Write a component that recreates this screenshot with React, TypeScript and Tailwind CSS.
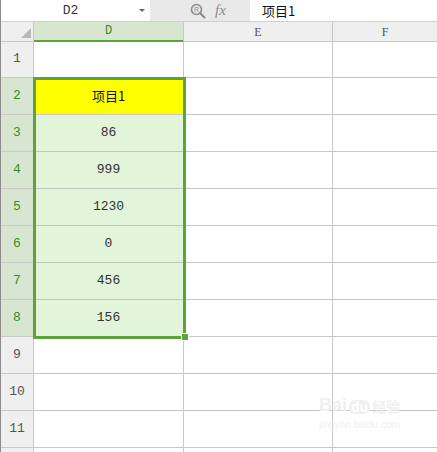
import React from 'react'

const rows = [
  { n: 1, v: '' },
  { n: 2, v: '项目1' },
  { n: 3, v: '86' },
  { n: 4, v: '999' },
  { n: 5, v: '1230' },
  { n: 6, v: '0' },
  { n: 7, v: '456' },
  { n: 8, v: '156' },
  { n: 9, v: '' },
  { n: 10, v: '' },
  { n: 11, v: '' },
]

const mono = { fontFamily: '"Liberation Mono", "Noto Sans CJK SC", monospace' }

function MagnifierIcon() {
  return (
    <svg width="16" height="16" viewBox="0 0 16 16" fill="none">
      <circle cx="6.5" cy="6.5" r="5" stroke="#8a8a8a" strokeWidth="1.6" />
      <path d="M10 10 L14.5 14.5" stroke="#8a8a8a" strokeWidth="2" strokeLinecap="round" />
      <text x="6.5" y="9" textAnchor="middle" fontSize="7" fill="#8a8a8a" fontFamily="Liberation Sans, sans-serif">R</text>
    </svg>
  )
}

export default function App() {
  return (
    <div className="relative w-[437px] h-[452px] overflow-hidden bg-white border-l border-[#8c8c8c]" style={mono}>
      {/* Formula bar */}
      <div className="flex h-[22px] bg-[#e9e9e9] border-b border-[#d0d0d0]">
        <div className="relative w-[149px] h-[21px] bg-white flex items-center justify-center pr-[10px] text-[13px] text-[#333]">
          D2
          <span className="absolute right-[5px] top-[9px] w-0 h-0 border-l-[3px] border-r-[3px] border-t-[3px] border-l-transparent border-r-transparent border-t-[#666]" />
        </div>
        <div className="w-[100px] flex items-center pl-[40px] gap-[9px]">
          <MagnifierIcon />
          <span className="italic text-[15px] text-[#8a8a8a]" style={{ fontFamily: '"Liberation Serif", serif' }}>fx</span>
        </div>
        <div className="flex-1 h-[21px] bg-white flex items-center pl-[12px] text-[13px] text-[#111]" style={{ fontFamily: '"Noto Sans CJK SC", sans-serif' }}>
          项目1
        </div>
      </div>

      {/* Column headers */}
      <div className="grid grid-cols-[33px_150px_149px_1fr] h-[19px] text-[12px]">
        <div className="relative bg-[#efefef] border-r border-b border-[#c8c8c8]">
          <svg className="absolute right-[2px] bottom-[3px]" width="10" height="10" viewBox="0 0 10 10">
            <polygon points="10,0 10,10 0,10" fill="#b8b8b8" />
          </svg>
        </div>
        <div className="bg-[#d7e7cf] border-r border-[#c8c8c8] border-b-2 border-b-[#5ba33a] flex items-center justify-center text-[#3b8a1d]">D</div>
        <div className="bg-[#efefef] border-r border-b border-[#c8c8c8] flex items-center justify-center text-[#555]" style={{ fontFamily: '"Liberation Serif", serif' }}>E</div>
        <div className="bg-[#efefef] border-b border-[#c8c8c8] flex items-center justify-center text-[#555]" style={{ fontFamily: '"Liberation Serif", serif' }}>F</div>
      </div>

      {/* Rows */}
      {rows.map((r) => {
        const sel = r.n >= 2 && r.n <= 8
        return (
          <div key={r.n} className="grid grid-cols-[33px_150px_149px_1fr] h-[37px] text-[13px]">
            <div
              className={
                sel
                  ? 'bg-[#d8e6d1] border-r border-b border-[#c8c8c8] flex items-center justify-center text-[#3b8a1d]'
                  : 'bg-[#efefef] border-r border-b border-[#c8c8c8] flex items-center justify-center text-[#555]'
              }
            >
              {r.n}
            </div>
            <div
              className={
                r.n === 2
                  ? 'bg-[#ffff00] border-r border-b border-[#c8c8c8] flex items-center justify-center text-[#111]'
                  : sel
                  ? 'bg-[#e2f4d9] border-r border-b border-[#c0c8bc] flex items-center justify-center text-[#333]'
                  : 'border-r border-b border-[#c8c8c8]'
              }
              style={r.n === 2 ? { fontFamily: '"Noto Sans CJK SC", sans-serif' } : undefined}
            >
              {r.v}
            </div>
            <div className="border-r border-b border-[#c8c8c8]" />
            <div className="border-b border-[#c8c8c8]" />
          </div>
        )
      })}
      <div className="grid grid-cols-[33px_150px_149px_1fr] h-[37px]">
        <div className="bg-[#efefef] border-r border-[#c8c8c8]" />
        <div className="border-r border-[#c8c8c8]" />
        <div className="border-r border-[#c8c8c8]" />
        <div />
      </div>

      {/* Selection outline */}
      <div className="absolute left-[32px] top-[77px] w-[153px] h-[262px] border-[3px] border-[#5ba33a] pointer-events-none" />
      <div className="absolute left-[181px] top-[334px] w-[6px] h-[6px] bg-[#5ba33a] outline outline-1 outline-white pointer-events-none" />

      {/* Watermark */}
      <div className="absolute left-[318px] top-[396px] flex flex-col items-center pointer-events-none select-none">
        <div className="flex items-end gap-[2px] text-[18px] font-bold text-[#f0f0f0] leading-none" style={{ fontFamily: '"Liberation Sans", "Noto Sans CJK SC", sans-serif' }}>
          <span>Bai</span>
          <span className="bg-[#f0f0f0] text-white rounded-[6px] px-[2px] text-[14px]">du</span>
          <span className="text-[14px]">经验</span>
        </div>
        <div className="text-[10px] text-[#f0f0f0] mt-[3px]" style={{ fontFamily: '"Liberation Sans", sans-serif' }}>jingyan.baidu.com</div>
      </div>
    </div>
  )
}
